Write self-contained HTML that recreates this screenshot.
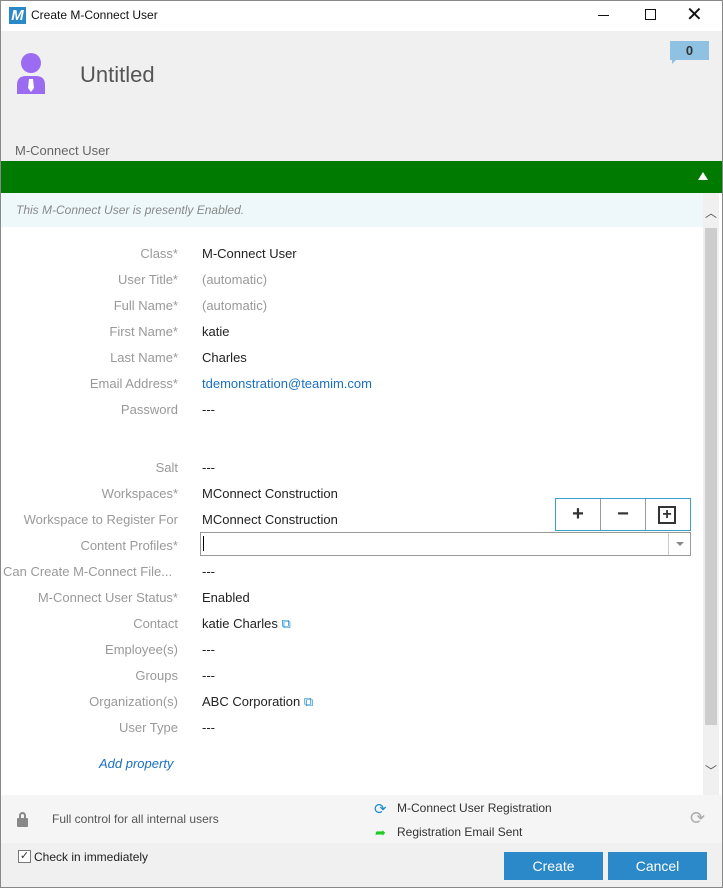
<!DOCTYPE html>
<html><head><style>
*{margin:0;padding:0;box-sizing:border-box}
body{width:723px;height:888px;overflow:hidden;font-family:"Liberation Sans",sans-serif;font-size:13px;background:#fff;position:relative}
.a{position:absolute}
.lab{position:absolute;right:545px;color:#999;white-space:nowrap;text-align:right}
.val{position:absolute;left:202px;color:#222;white-space:nowrap}
</style></head><body>
<div class="a" style="left:0;top:0;width:723px;height:888px;border:1px solid #888;z-index:10;pointer-events:none"></div>
<!-- title bar -->
<div class="a" style="left:0;top:0;width:723px;height:31px;background:#fff"></div>
<div class="a" style="left:9px;top:7px;width:17px;height:17px;background:#2b88c9;color:#fff;font-weight:bold;font-style:italic;font-size:15px;line-height:17px;text-align:center">M</div>
<div class="a" style="left:31px;top:8px;font-size:12px;color:#111">Create M-Connect User</div>
<div class="a" style="left:598px;top:15px;width:11px;height:1px;background:#111"></div>
<div class="a" style="left:645px;top:9px;width:11px;height:11px;border:1px solid #111"></div>
<div class="a" style="left:686px;top:2px;font-size:20px;color:#111">✕</div>
<!-- header -->
<div class="a" style="left:1px;top:31px;width:721px;height:130px;background:#f0f0f0"></div>
<svg class="a" style="left:17px;top:50px" width="28" height="45" viewBox="0 0 28 45"><circle cx="14" cy="13" r="10" fill="#9b6cf2"/><path d="M0 44 V35 Q0 26 9 26 H19 Q28 26 28 35 V44Z" fill="#9b6cf2"/><path d="M12 29 H16 L17 38 L14 42 L11 38Z" fill="#fff"/></svg>
<div class="a" style="left:80px;top:62px;font-size:22px;color:#555">Untitled</div>
<div class="a" style="left:670px;top:41px;width:39px;height:19px;background:#8fc1e3;text-align:center;font-weight:bold;color:#333;line-height:19px">0</div>
<div class="a" style="left:672px;top:60px;width:0;height:0;border-left:4px solid #8fc1e3;border-bottom:4px solid transparent"></div>
<div class="a" style="left:15px;top:143px;color:#666;font-size:13px">M-Connect User</div>
<div class="a" style="left:1px;top:161px;width:721px;height:32px;background:#007a00"></div>
<div class="a" style="left:698px;top:172px;width:0;height:0;border-left:5px solid transparent;border-right:5px solid transparent;border-bottom:8px solid #fff"></div>
<div class="a" style="left:1px;top:193px;width:702px;height:34px;background:#eef8fb"></div>
<div class="a" style="left:16px;top:203px;font-style:italic;color:#888;font-size:12px">This M-Connect User is presently Enabled.</div>
<!-- scrollbar -->
<div class="a" style="left:703px;top:193px;width:16px;height:602px;background:#f0f0f0"></div>
<div class="a" style="left:705px;top:228px;width:12px;height:497px;background:#cdcdcd"></div>
<div class="a" style="left:705px;top:204px;font-size:12px;color:#555">︿</div>
<div class="a" style="left:705px;top:762px;font-size:12px;color:#555">﹀</div>
<!-- form -->
<div class="lab" style="top:246px">Class*</div><div class="val" style="top:246px">M-Connect User</div>
<div class="lab" style="top:272px">User Title*</div><div class="val" style="top:272px;color:#999">(automatic)</div>
<div class="lab" style="top:298px">Full Name*</div><div class="val" style="top:298px;color:#999">(automatic)</div>
<div class="lab" style="top:324px">First Name*</div><div class="val" style="top:324px">katie</div>
<div class="lab" style="top:350px">Last Name*</div><div class="val" style="top:350px">Charles</div>
<div class="lab" style="top:376px">Email Address*</div><div class="val" style="top:376px;color:#1a6fc0">tdemonstration@teamim.com</div>
<div class="lab" style="top:402px">Password</div><div class="val" style="top:402px">---</div>
<div class="lab" style="top:460px">Salt</div><div class="val" style="top:460px">---</div>
<div class="lab" style="top:486px">Workspaces*</div><div class="val" style="top:486px">MConnect Construction</div>
<div class="lab" style="top:512px">Workspace to Register For</div><div class="val" style="top:512px">MConnect Construction</div>
<div class="lab" style="top:538px">Content Profiles*</div>
<div class="a" style="left:200px;top:532px;width:491px;height:24px;border:1px solid #999;background:#fff"></div>
<div class="a" style="left:203px;top:536px;width:1px;height:15px;background:#000"></div>
<div class="a" style="left:668px;top:533px;width:1px;height:22px;background:#ccc"></div>
<div class="a" style="left:676px;top:542px;width:0;height:0;border-left:4px solid transparent;border-right:4px solid transparent;border-top:4px solid #888"></div>
<div class="a" style="left:555px;top:498px;width:136px;height:33px;border:1px solid #3aa0c8;background:#fff;display:flex">
<div style="flex:1;border-right:1px solid #999;text-align:center;font-size:20px;font-weight:bold;line-height:31px;color:#333">+</div>
<div style="flex:1;border-right:1px solid #999;text-align:center;font-size:20px;font-weight:bold;line-height:30px;color:#333">−</div>
<div style="flex:1;position:relative"><div style="position:absolute;left:12px;top:7px;width:18px;height:18px;border:2px solid #333;text-align:center;font-weight:bold;line-height:13px;font-size:16px;color:#333">+</div></div></div>
<div class="lab" style="top:564px;left:3px;right:auto">Can Create M-Connect File...</div><div class="val" style="top:564px">---</div>
<div class="lab" style="top:590px">M-Connect User Status*</div><div class="val" style="top:590px">Enabled</div>
<div class="lab" style="top:616px">Contact</div><div class="val" style="top:616px">katie Charles <span style="color:#1a8ad0">⧉</span></div>
<div class="lab" style="top:642px">Employee(s)</div><div class="val" style="top:642px">---</div>
<div class="lab" style="top:668px">Groups</div><div class="val" style="top:668px">---</div>
<div class="lab" style="top:694px">Organization(s)</div><div class="val" style="top:694px">ABC Corporation <span style="color:#1a8ad0">⧉</span></div>
<div class="lab" style="top:720px">User Type</div><div class="val" style="top:720px">---</div>
<div class="a" style="left:99px;top:756px;color:#1a6fc0;font-style:italic">Add property</div>
<!-- footer -->
<div class="a" style="left:1px;top:795px;width:721px;height:48px;background:#f5f5f5"></div>
<div class="a" style="left:17px;top:818px;width:11px;height:9px;background:#888;border-radius:1px"></div>
<div class="a" style="left:19px;top:812px;width:7px;height:8px;border:2px solid #888;border-bottom:none;border-radius:4px 4px 0 0"></div>
<div class="a" style="left:52px;top:812px;color:#555;font-size:12px">Full control for all internal users</div>
<div class="a" style="left:374px;top:800px;font-size:15px;color:#1a8ad0">⟳</div>
<div class="a" style="left:397px;top:801px;color:#333;font-size:12px">M-Connect User Registration</div>
<div class="a" style="left:375px;top:825px;color:#2c2;font-size:13px">➦</div>
<div class="a" style="left:397px;top:825px;color:#333;font-size:12px">Registration Email Sent</div>
<div class="a" style="left:690px;top:808px;font-size:18px;color:#aaa">⟳</div>
<div class="a" style="left:1px;top:843px;width:721px;height:45px;background:#f0f0f0"></div>
<div class="a" style="left:18px;top:850px;width:13px;height:13px;border:1px solid #777;background:#fff;font-size:11px;line-height:11px;text-align:center;color:#333">✓</div>
<div class="a" style="left:34px;top:850px;color:#222;font-size:12px">Check in immediately</div>
<div class="a" style="left:504px;top:852px;width:99px;height:28px;background:#2b88c9;color:#fff;text-align:center;line-height:28px;font-size:14px">Create</div>
<div class="a" style="left:608px;top:852px;width:99px;height:28px;background:#2b88c9;color:#fff;text-align:center;line-height:28px;font-size:14px">Cancel</div>
</body></html>
